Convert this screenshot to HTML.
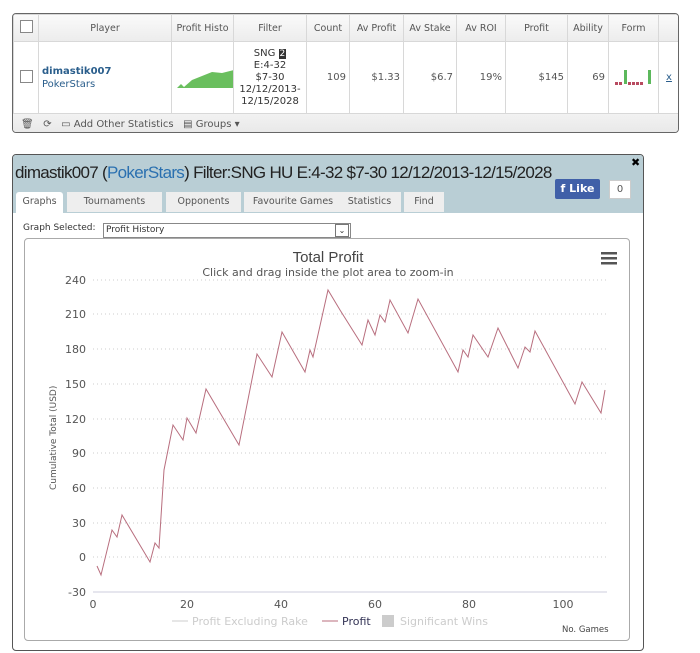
<!DOCTYPE html>
<html><head><style>
body{margin:0;width:700px;height:653px;background:#fff;font-family:"DejaVu Sans","Liberation Sans",sans-serif;position:relative;overflow:hidden}
.a{position:absolute}
table{border-collapse:collapse;font-size:10px;color:#555}
td{border:1px solid #d8d8d8;padding:0 3px;white-space:nowrap;overflow:hidden}
.cb{width:11px;height:11px;border:1px solid #888;background:#fff;display:inline-block}
</style></head><body>
<div class="a" style="left:12px;top:13px;width:665px;height:118px;border:1px solid #666;border-radius:4px;overflow:hidden">
<table style="width:666px;height:96px;table-layout:fixed">
<colgroup><col style="width:25px"><col style="width:133px"><col style="width:62px"><col style="width:73px"><col style="width:43px"><col style="width:54px"><col style="width:53px"><col style="width:49px"><col style="width:62px"><col style="width:41px"><col style="width:50px"><col style="width:21px"></colgroup>
<tr style="height:27px;background:linear-gradient(#fafafa,#ececec);text-align:center;font-size:9.5px">
<td><span class="cb"></span></td><td>Player</td><td>Profit Histo</td><td>Filter</td><td>Count</td><td>Av Profit</td><td>Av Stake</td><td>Av ROI</td><td>Profit</td><td>Ability</td><td>Form</td><td></td></tr>
<tr style="height:68px;text-align:right">
<td style="text-align:center"><span class="cb"></span></td>
<td style="text-align:left;color:#2a5e8c;line-height:13px"><b>dimastik007</b><br>PokerStars</td>
<td style="padding:0"><svg width="62" height="68"><path d="M5,46 L9,42 L12,45 L20,38 L30,34 L40,30 L50,31 L62,28 L62,46Z" fill="#6abf5e"/></svg></td>
<td style="text-align:center;line-height:12px;color:#333">SNG <span style="background:#333;color:#fff;font-size:9px;padding:0 1px">2</span><br>E:4-32<br>$7-30<br>12/12/2013-<br>12/15/2028</td>
<td>109</td><td>$1.33</td><td>$6.7</td><td>19%</td><td>$145</td><td>69</td>
<td style="padding:0"><svg width="50" height="68"><g fill="#b84a60"><rect x="6" y="40" width="3" height="3"/><rect x="10" y="40" width="3" height="3"/><rect x="19" y="40" width="3" height="3"/><rect x="23" y="40" width="3" height="3"/><rect x="27" y="40" width="3" height="3"/><rect x="31" y="40" width="3" height="3"/></g><g fill="#5cb85c"><rect x="15" y="28" width="3" height="14"/><rect x="39" y="28" width="3" height="14"/></g></svg></td>
<td style="text-align:center;color:#2a5e8c;text-decoration:underline">x</td></tr>
</table>
<div style="height:24px;background:linear-gradient(#f2f2f2,#e6e6e6);font-size:10px;color:#555;line-height:22px;padding-left:8px">🗑&nbsp;&nbsp;&nbsp;⟳&nbsp;&nbsp;&nbsp;▭ Add Other Statistics&nbsp;&nbsp;&nbsp;▤ Groups ▾</div>
</div>

<div class="a" style="left:12px;top:154px;width:630px;height:495px;border:1px solid #555;border-radius:4px;overflow:hidden">
<div style="height:58px;background:#b9ced5;position:relative">
<div class="a" style="left:2px;top:8px;font-family:'Liberation Sans',sans-serif;font-size:17px;color:#222;letter-spacing:-0.7px">dimastik007 (<span style="color:#2a70b0">PokerStars</span>) Filter:SNG HU E:4-32 $7-30 12/12/2013-12/15/2028</div>
<div class="a" style="left:618px;top:1px;font-size:11px;font-weight:bold">✖</div>
<div class="a" style="left:542px;top:24px;width:45px;height:20px;background:#4060a8;color:#fff;font-size:11px;font-weight:bold;line-height:20px;border-radius:2px;text-align:center">f Like</div>
<div class="a" style="left:596px;top:25px;width:20px;height:17px;background:#fff;border:1px solid #ccc;font-size:10px;text-align:center;line-height:17px;color:#555">0</div>
<div class="a" style="left:0;top:37px;font-size:9.5px;color:#555">
<span class="a" style="left:3px;top:0;width:47px;height:21px;background:#fff;text-align:center;line-height:20px;border-radius:3px 3px 0 0">Graphs</span>
<span class="a" style="left:54px;top:0;width:95px;height:20px;background:#eee;text-align:center;line-height:20px">Tournaments</span>
<span class="a" style="left:153px;top:0;width:75px;height:20px;background:#eee;text-align:center;line-height:20px">Opponents</span>
<span class="a" style="left:231px;top:0;width:98px;height:20px;background:#eee;text-align:center;line-height:20px">Favourite Games</span>
<span class="a" style="left:325px;top:0;width:63px;height:20px;background:#eee;text-align:center;line-height:20px">Statistics</span>
<span class="a" style="left:391px;top:0;width:40px;height:20px;background:#eee;text-align:center;line-height:20px">Find</span>
</div></div>
<div class="a" style="left:10px;top:68px;font-size:9px;color:#333">Graph Selected:</div>
<div class="a" style="left:90px;top:68px;width:244px;height:13px;border:1px solid #888;font-size:9px;line-height:13px;padding-left:2px;color:#333">Profit History<span class="a" style="right:1px;top:0;width:12px;height:11px;border:1px solid #777;font-size:8px;text-align:center;line-height:11px">⌄</span></div>
</div>

<div class="a" style="left:24px;top:238px;width:604px;height:401px;border:1px solid #aaa;border-radius:4px"></div>
<svg class="a" style="left:0;top:0" width="700" height="653" font-family="DejaVu Sans,sans-serif">
<text x="328" y="262" font-size="15" fill="#444" text-anchor="middle" font-family="Liberation Sans">Total Profit</text>
<text x="328" y="276" font-size="11" fill="#555" text-anchor="middle">Click and drag inside the plot area to zoom-in</text>
<g fill="#555"><rect x="601" y="252" width="16" height="2.5"/><rect x="601" y="257" width="16" height="2.5"/><rect x="601" y="262" width="16" height="2.5"/></g>
<g stroke="#ccc" stroke-dasharray="1,3">
<line x1="93" x2="607" y1="280" y2="280"/><line x1="93" x2="607" y1="314" y2="314"/><line x1="93" x2="607" y1="349" y2="349"/><line x1="93" x2="607" y1="384" y2="384"/><line x1="93" x2="607" y1="419" y2="419"/><line x1="93" x2="607" y1="453" y2="453"/><line x1="93" x2="607" y1="488" y2="488"/><line x1="93" x2="607" y1="523" y2="523"/><line x1="93" x2="607" y1="557" y2="557"/></g>
<line x1="93" x2="607" y1="592" y2="592" stroke="#ccd"/>
<g font-size="11" fill="#555" text-anchor="end">
<text x="86" y="284">240</text><text x="86" y="318">210</text><text x="86" y="353">180</text><text x="86" y="388">150</text><text x="86" y="423">120</text><text x="86" y="457">90</text><text x="86" y="492">60</text><text x="86" y="527">30</text><text x="86" y="561">0</text><text x="86" y="596">-30</text></g>
<g font-size="11" fill="#555" text-anchor="middle">
<text x="93" y="608">0</text><text x="187" y="608">20</text><text x="281" y="608">40</text><text x="375" y="608">60</text><text x="469" y="608">80</text><text x="563" y="608">100</text></g>
<text transform="translate(56,490) rotate(-90)" font-size="9" fill="#555">Cumulative Total (USD)</text>
<polyline fill="none" stroke="#b86e7e" stroke-width="1" points="97,566 101,575 112,530 117,537 122,515 150,562 155,543 159,548 164,470 173,425 183,440 187,418 196,433 206,389 239,445 257,354 272,377 282,332 305,372 310,350 313,357 328,290 340,310 362,345 368,320 375,335 380,315 385,322 390,300 408,333 418,299 458,372 463,350 468,357 473,335 488,357 498,328 518,368 525,347 530,352 535,331 575,404 582,382 601,413 605,390"/>
<g font-size="11"><line x1="172" x2="188" y1="621" y2="621" stroke="#ccc"/><text x="192" y="625" fill="#ccc">Profit Excluding Rake</text>
<line x1="322" x2="338" y1="621" y2="621" stroke="#b86e7e"/><text x="342" y="625" fill="#335">Profit</text>
<rect x="382" y="615" width="12" height="12" fill="#ccc"/><text x="400" y="625" fill="#ccc">Significant Wins</text></g>
<text x="562" y="632" font-size="8.5" fill="#444">No. Games</text>
</svg>
</body></html>
